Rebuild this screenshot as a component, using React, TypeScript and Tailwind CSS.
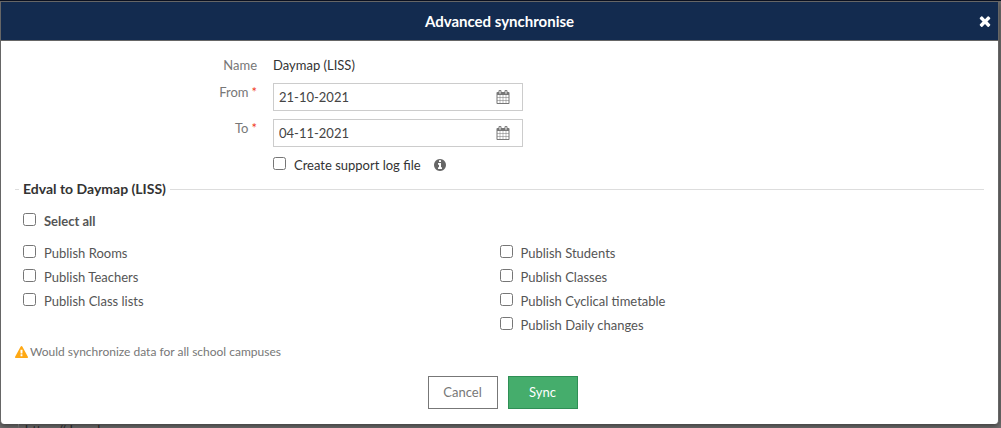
import { useState } from "react";

const leftOptions = ["Publish Rooms", "Publish Teachers", "Publish Class lists"];
const rightOptions = [
  "Publish Students",
  "Publish Classes",
  "Publish Cyclical timetable",
  "Publish Daily changes",
];
const allOptions = [...leftOptions, ...rightOptions];

const icons = {
  times:
    "M1490 1322q0 40-28 68l-136 136q-28 28-68 28t-68-28l-294-294-294 294q-28 28-68 28t-68-28l-136-136q-28-28-28-68t28-68l294-294-294-294q-28-28-28-68t28-68l136-136q28-28 68-28t68 28l294 294 294-294q28-28 68-28t68 28l136 136q28 28 28 68t-28 68l-294 294 294 294q28 28 28 68z",
  calendar:
    "M192 1664h288v-288h-288v288zm352 0h320v-288h-320v288zm-352-352h288v-320h-288v320zm352 0h320v-320h-320v320zm-352-384h288v-288h-288v288zm736 736h320v-288h-320v288zm-384-736h320v-288h-320v288zm768 736h288v-288h-288v288zm-384-352h320v-320h-320v320zm-352-864v-288q0-13-9.5-22.5t-22.5-9.5h-64q-13 0-22.5 9.5t-9.5 22.5v288q0 13 9.5 22.5t22.5 9.5h64q13 0 22.5-9.5t9.5-22.5zm736 864h288v-320h-288v320zm-384-384h320v-288h-320v288zm384 0h288v-288h-288v288zm32-480v-288q0-13-9.5-22.5t-22.5-9.5h-64q-13 0-22.5 9.5t-9.5 22.5v288q0 13 9.5 22.5t22.5 9.5h64q13 0 22.5-9.5t9.5-22.5zm384-64v1280q0 52-38 90t-90 38h-1408q-52 0-90-38t-38-90v-1280q0-52 38-90t90-38h128v-96q0-66 47-113t113-47h64q66 0 113 47t47 113v96h384v-96q0-66 47-113t113-47h64q66 0 113 47t47 113v96h128q52 0 90 38t38 90z",
  info: "M1152 1376v-160q0-14-9-23t-23-9h-96v-512q0-14-9-23t-23-9h-320q-14 0-23 9t-9 23v160q0 14 9 23t23 9h96v320h-96q-14 0-23 9t-9 23v160q0 14 9 23t23 9h448q14 0 23-9t9-23zm-128-896v-160q0-14-9-23t-23-9h-192q-14 0-23 9t-9 23v160q0 14 9 23t23 9h192q14 0 23-9t9-23zm640 416q0 209-103 385.5t-279.5 279.5-385.5 103-385.5-103-279.5-279.5-103-385.5 103-385.5 279.5-279.5 385.5-103 385.5 103 279.5 279.5 103 385.5z",
  warning:
    "M1024 1375v-190q0-14-9.5-23.5t-22.5-9.5h-192q-13 0-22.5 9.5t-9.5 23.5v190q0 14 9.5 23.5t22.5 9.5h192q13 0 22.5-9.5t9.5-23.5zm-2-374l18-459q0-12-10-19-13-11-24-11h-220q-11 0-24 11-10 7-10 21l17 457q0 10 10 16.5t24 6.5h185q14 0 23.5-6.5t10.5-16.5zm-14-934l768 1408q35 63-2 126-17 29-46.5 46t-63.5 17h-1536q-34 0-63.5-17t-46.5-46q-37-63-2-126l768-1408q17-31 47-49t65-18 65 18 47 49z",
};

function Icon({ name, className }: { name: keyof typeof icons; className: string }) {
  return (
    <svg viewBox="0 0 1792 1792" fill="currentColor" className={className} aria-hidden="true">
      <path d={icons[name]} />
    </svg>
  );
}

type CheckProps = {
  label: string;
  checked: boolean;
  onChange: (v: boolean) => void;
  className?: string;
};

function Check({ label, checked, onChange, className = "" }: CheckProps) {
  return (
    <label className={`flex w-fit items-start gap-2 leading-5 ${className}`}>
      <input
        type="checkbox"
        className="mt-0.5 size-[13px] shrink-0"
        checked={checked}
        onChange={(e) => onChange(e.target.checked)}
      />
      {label}
    </label>
  );
}

type DateRowProps = {
  id: string;
  label: string;
  value: string;
  onChange: (v: string) => void;
};

function DateRow({ id, label, value, onChange }: DateRowProps) {
  return (
    <div className="flex gap-4">
      <label htmlFor={id} className="flex w-[242px] shrink-0 justify-end gap-[3px] leading-[18px] text-[#777]">
        {label}
        <span className="text-[#f03a22]">*</span>
      </label>
      <div className="flex h-7 w-[250px] items-center border border-[#ccc]">
        <input
          id={id}
          className="h-full min-w-0 flex-1 px-[5px] text-[#444] outline-none"
          value={value}
          onChange={(e) => onChange(e.target.value)}
        />
        <button type="button" aria-label={`Pick ${label} date`} className="px-3 text-[#777]">
          <Icon name="calendar" className="size-3.5" />
        </button>
      </div>
    </div>
  );
}

export default function App() {
  const [from, setFrom] = useState("21-10-2021");
  const [to, setTo] = useState("04-11-2021");
  const [log, setLog] = useState(false);
  const [selected, setSelected] = useState<string[]>([]);

  const toggle = (name: string, on: boolean) =>
    setSelected((prev) => (on ? [...prev, name] : prev.filter((n) => n !== name)));

  const renderOptions = (names: string[]) => (
    <div className="flex flex-col gap-1">
      {names.map((n) => (
        <Check key={n} label={n} checked={selected.includes(n)} onChange={(v) => toggle(n, v)} />
      ))}
    </div>
  );

  return (
    <div className="h-screen overflow-hidden border-t border-[#0a1020] bg-[#737171] font-['Lato',sans-serif] text-[13px] text-[#555]">
      <div
        role="dialog"
        aria-labelledby="dialog-title"
        className="mr-0.5 rounded-b border border-b-0 border-[#666] bg-white shadow-[0_2px_6px_rgba(0,0,0,0.5)]"
      >
        <header className="flex h-[39px] items-center border-b border-[#666] bg-[#132b4f] text-white">
          <h1 id="dialog-title" className="flex-1 pl-[21px] text-center text-[15px] font-bold">
            Advanced synchronise
          </h1>
          <button type="button" aria-label="Close" className="pr-[5px]">
            <Icon name="times" className="size-4" />
          </button>
        </header>

        <form className="px-3.5 pt-3.5 pb-[15px]" onSubmit={(e) => e.preventDefault()}>
          <div className="flex flex-col gap-2">
            <div className="flex gap-4 leading-5">
              <span className="w-[242px] shrink-0 text-right text-[#777]">Name</span>
              <span className="text-[#333]">Daymap (LISS)</span>
            </div>
            <DateRow id="from" label="From" value={from} onChange={setFrom} />
            <DateRow id="to" label="To" value={to} onChange={setTo} />
            <div className="flex items-start gap-3 pl-[258px]">
              <Check label="Create support log file" checked={log} onChange={setLog} className="text-[#333]" />
              <button type="button" aria-label="About the log file" className="pt-[3px] text-[#666]">
                <Icon name="info" className="size-3.5" />
              </button>
            </div>
          </div>

          <fieldset className="mt-1 border-t border-[#ddd] px-2">
            <legend className="-ml-1 px-1 text-sm leading-5 font-bold text-[#333]">
              Edval to Daymap (LISS)
            </legend>
            <Check
              label="Select all"
              checked={selected.length === allOptions.length}
              onChange={(v) => setSelected(v ? allOptions : [])}
              className="mt-3 font-bold"
            />
            <div className="mt-3 grid grid-cols-2">
              {renderOptions(leftOptions)}
              {renderOptions(rightOptions)}
            </div>
          </fieldset>

          <p className="mt-2 flex items-center gap-0.5 text-xs leading-[18px] text-[#777]">
            <Icon name="warning" className="size-[13px] text-[#ffa914]" />
            Would synchronize data for all school campuses
          </p>

          <div className="mt-[15px] flex justify-center gap-2.5 pl-1.5">
            <button type="button" className="h-[33px] w-[70px] border border-[#777] text-[#777]">
              Cancel
            </button>
            <button type="submit" className="h-[33px] w-[70px] border border-[#2f8f55] bg-[#45ad6c] text-white">
              Sync
            </button>
          </div>
        </form>
      </div>
      <a href="https://decod.eu" className="ml-[18px] block border-l border-[#666] pl-1.5 leading-3 text-[#222]">
        https://decod.eu
      </a>
    </div>
  );
}
